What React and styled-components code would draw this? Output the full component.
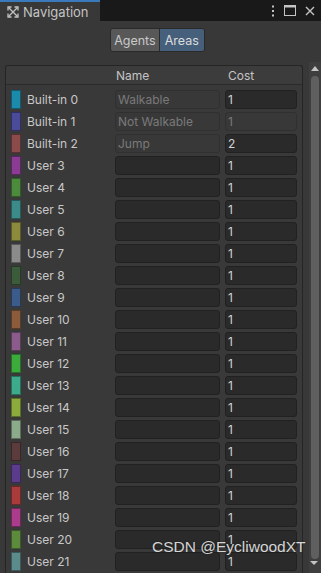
import React from "react";
import styled, { createGlobalStyle } from "styled-components";

const Global = createGlobalStyle`
  html, body { margin: 0; padding: 0; background: #383838; overflow: hidden; }
  body { font-family: "Inter", "Noto Sans", sans-serif; }
`;

const Window = styled.div`
  position: relative;
  width: 321px;
  height: 573px;
  display: flex;
  flex-direction: column;
  background: #383838;
  overflow: hidden;
`;

const TabBar = styled.div`
  height: 21px;
  flex: none;
  display: flex;
  align-items: stretch;
  background: #191919;
`;

const Tab = styled.div`
  width: 100px;
  box-sizing: border-box;
  border-top: 2px solid #3a79bb;
  background: #383838;
  display: flex;
  align-items: center;
  gap: 4px;
  padding-left: 7px;
  color: #c4c4c4;
  font-size: 13px;
`;

const TabActions = styled.div`
  margin-left: auto;
  display: flex;
  align-items: center;
  gap: 9px;
  padding-right: 6px;
  color: #c4c4c4;
`;

const Toolbar = styled.div`
  height: 41px;
  flex: none;
  display: flex;
  justify-content: center;
  padding-top: 7px;
  padding-right: 6px;
  box-sizing: border-box;
`;

const Segmented = styled.div`
  display: flex;
  height: 22px;
  border: 1px solid #2a2a2a;
  border-radius: 3px;
  overflow: hidden;
`;

const SegButton = styled.div`
  display: flex;
  align-items: center;
  padding: 0 ${(p) => (p.$active ? "5px" : "3px")};
  font-size: 12.5px;
  color: ${(p) => (p.$active ? "#dcdcdc" : "#c8c8c8")};
  background: ${(p) => (p.$active ? "#46607c" : "#585858")};
  border-left: ${(p) => (p.$active ? "1px solid #2a2a2a" : "none")};
`;

const Body = styled.div`
  flex: 1;
  display: flex;
  min-height: 0;
`;

const TableArea = styled.div`
  flex: 1;
  padding: 3px 6px 0 5px;
  min-width: 0;
`;

const Table = styled.div`
  border: 1px solid #252525;
  border-bottom: none;
  border-radius: 3px 3px 0 0;
  background: #393939;
  height: 100%;
  box-sizing: border-box;
`;

const Header = styled.div`
  height: 18px;
  display: grid;
  grid-template-columns: 104px 110px 72px;
  padding-left: 5px;
  align-items: center;
  background: #3c3c3c;
  border-bottom: 1px solid #2b2b2b;
  border-radius: 3px 3px 0 0;
  font-size: 12px;
  color: #c4c4c4;
`;

const HeadCell = styled.div`
  padding-left: ${(p) => p.$pad || 0}px;
`;

const Rows = styled.div`
  padding-top: 3px;
`;

const Row = styled.div`
  height: 22px;
  display: grid;
  grid-template-columns: 10px 94px 105px 77px;
  padding-left: 5px;
  align-items: center;
`;

const Swatch = styled.div`
  width: 10px;
  height: 19px;
  box-sizing: border-box;
  border: 1px solid rgba(0, 0, 0, 0.35);
  background: ${(p) => p.$color};
`;

const Label = styled.div`
  padding-left: 6px;
  font-size: 12px;
  color: #c8c8c8;
  white-space: nowrap;
`;

const Field = styled.div`
  height: 19px;
  box-sizing: border-box;
  margin-left: ${(p) => p.$ml || 0}px;
  border-radius: 3px;
  border: 1px solid ${(p) => (p.$disabled ? "#303030" : "#212121")};
  background: ${(p) => (p.$disabled ? "#383838" : "#2a2a2a")};
  color: ${(p) => (p.$disabled ? "#7a7a7a" : "#d2d2d2")};
  font-size: 12px;
  display: flex;
  align-items: center;
  padding-left: 2px;
  white-space: nowrap;
  overflow: hidden;
`;

const Scrollbar = styled.div`
  width: 12px;
  flex: none;
  background: #3e3e3e;
  display: flex;
  flex-direction: column;
  align-items: center;
  padding-top: 4px;
  gap: 5px;
`;

const Thumb = styled.div`
  width: 8px;
  flex: 1;
  border-radius: 4px;
  background: #5f5f5f;
  margin-bottom: 14px;
`;

const Watermark = styled.div`
  position: absolute;
  left: 152px;
  top: 538px;
  font-size: 15.5px;
  color: rgba(255, 255, 255, 0.82);
  font-family: "Liberation Sans", "Noto Sans", sans-serif;
  text-shadow: 0 0 2px rgba(0, 0, 0, 0.4);
  white-space: nowrap;
  pointer-events: none;
`;

const DownArrow = styled.div`
  position: absolute;
  left: 310px;
  top: 561px;
  width: 0;
  height: 0;
  border-left: 4px solid transparent;
  border-right: 4px solid transparent;
  border-top: 4px solid #c4c4c4;
`;

const areas = [
  ["Built-in 0", "#1b8bab", "Walkable", "1", true, false],
  ["Built-in 1", "#4b4b9b", "Not Walkable", "1", true, true],
  ["Built-in 2", "#8b4b4b", "Jump", "2", true, false],
  ["User 3", "#8b3b93"],
  ["User 4", "#4b8b3b"],
  ["User 5", "#3b8b8b"],
  ["User 6", "#8b8b3b"],
  ["User 7", "#8b8b8b"],
  ["User 8", "#3b5b3b"],
  ["User 9", "#3b5b8b"],
  ["User 10", "#8b5b3b"],
  ["User 11", "#8b5b8b"],
  ["User 12", "#3bab3b"],
  ["User 13", "#3bab8b"],
  ["User 14", "#8bab3b"],
  ["User 15", "#8bab8b"],
  ["User 16", "#5b3b3b"],
  ["User 17", "#5b3b8b"],
  ["User 18", "#ab3b3b"],
  ["User 19", "#ab3b8b"],
  ["User 20", "#5b8b3b"],
  ["User 21", "#5b8b8b"],
];

const NavIcon = () => (
  <svg width="12" height="12" viewBox="0 0 12 12" fill="none" stroke="#c4c4c4" strokeWidth="1.3">
    <path d="M1.5 1.5 L10.5 10.5 M10.5 1.5 L1.5 10.5" />
    <path d="M1 4.5 V1 H4.5 M7.5 1 H11 V4.5 M11 7.5 V11 H7.5 M4.5 11 H1 V7.5" />
  </svg>
);

export default function App() {
  return (
    <Window>
      <Global />
      <TabBar>
        <Tab>
          <NavIcon />
          <span>Navigation</span>
        </Tab>
        <TabActions>
          <svg width="4" height="12" viewBox="0 0 4 12" fill="#c4c4c4">
            <rect x="1" y="0.5" width="2" height="2" />
            <rect x="1" y="5" width="2" height="2" />
            <rect x="1" y="9.5" width="2" height="2" />
          </svg>
          <svg width="12" height="11" viewBox="0 0 12 11" fill="none" stroke="#c4c4c4">
            <rect x="0.5" y="0.5" width="11" height="10" strokeWidth="1" />
            <rect x="0.5" y="0.5" width="11" height="1.5" fill="#c4c4c4" />
          </svg>
          <svg width="10" height="10" viewBox="0 0 10 10" stroke="#c4c4c4" strokeWidth="1.4">
            <path d="M1 1 L9 9 M9 1 L1 9" />
          </svg>
        </TabActions>
      </TabBar>
      <Toolbar>
        <Segmented>
          <SegButton>Agents</SegButton>
          <SegButton $active>Areas</SegButton>
        </Segmented>
      </Toolbar>
      <Body>
        <TableArea>
          <Table>
            <Header>
              <div />
              <HeadCell $pad={1}>Name</HeadCell>
              <HeadCell $pad={3}>Cost</HeadCell>
            </Header>
            <Rows>
              {areas.map(([label, color, name = "", cost = "1", nameDis = false, costDis = false]) => (
                <Row key={label}>
                  <Swatch $color={color} />
                  <Label>{label}</Label>
                  <Field $disabled={nameDis}>{name}</Field>
                  <Field $disabled={costDis} $ml={5}>{cost}</Field>
                </Row>
              ))}
            </Rows>
          </Table>
        </TableArea>
        <Scrollbar>
          <svg width="8" height="5" viewBox="0 0 8 5" fill="#c4c4c4">
            <path d="M0 5 L4 0 L8 5 Z" />
          </svg>
          <Thumb />
        </Scrollbar>
      </Body>
      <DownArrow />
      <Watermark>CSDN @EycliwoodXT</Watermark>
    </Window>
  );
}
